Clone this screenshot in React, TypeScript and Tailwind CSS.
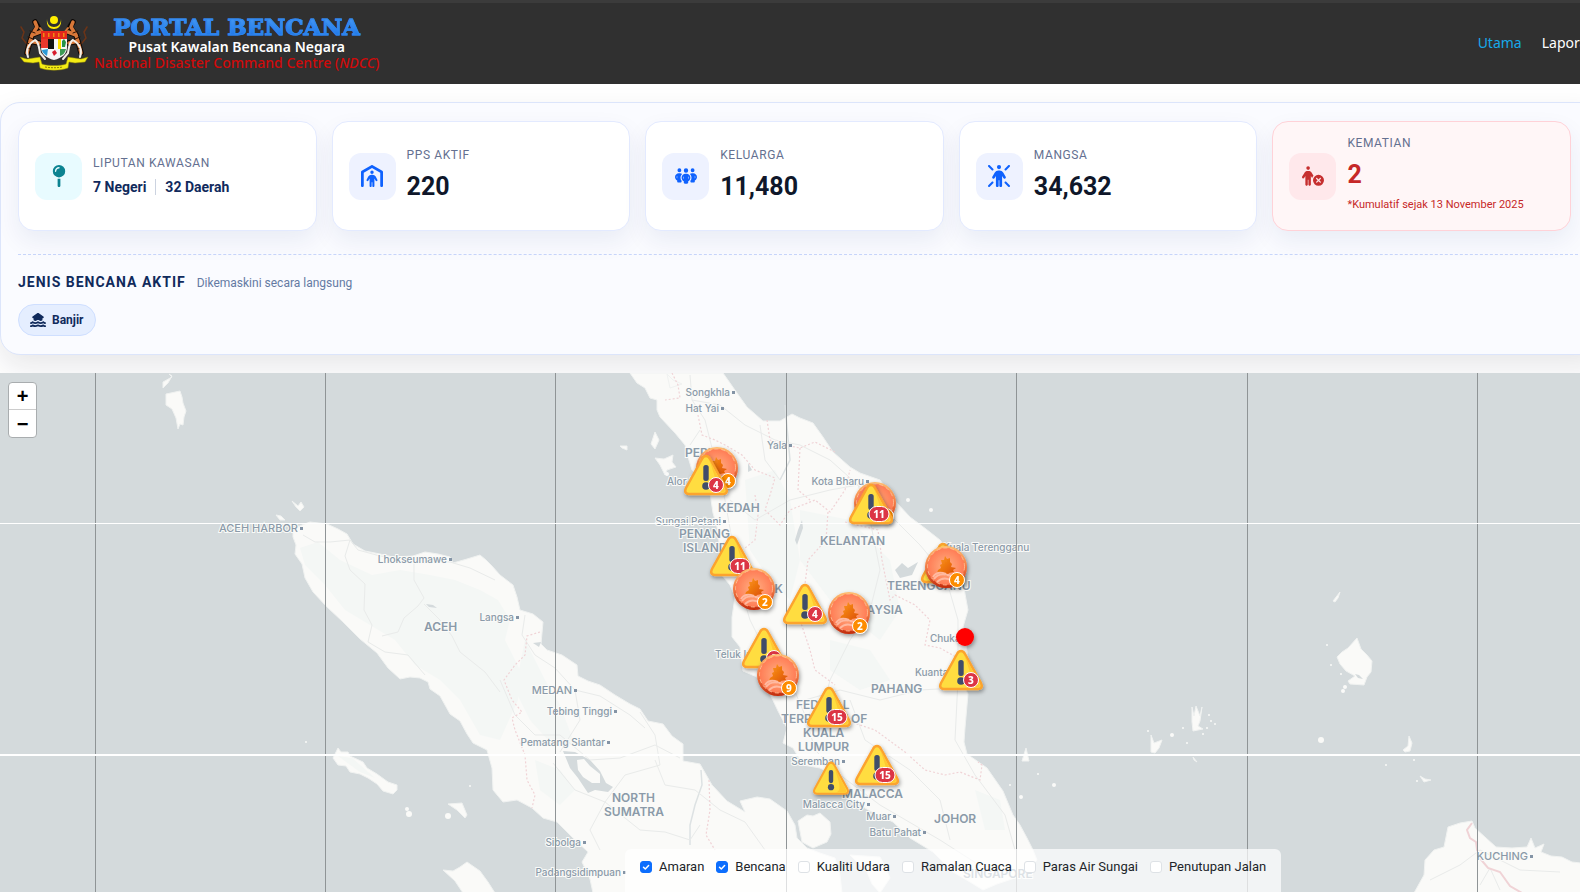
import { useState } from "react";
import type { ReactNode } from "react";
import { FaHouseFloodWater, FaMapPin, FaPeopleGroup, FaPersonCircleXmark, FaPersonRays, FaPersonShelter } from "react-icons/fa6";

const stats = [
  { label: "PPS Aktif", value: "220", icon: FaPersonShelter },
  { label: "Keluarga", value: "11,480", icon: FaPeopleGroup },
  { label: "Mangsa", value: "34,632", icon: FaPersonRays },
];

const land = [
  // Sumatra
  "293,529 302,525 310,522 327,524 338,529 347,534 353,544 365,551 380,554 393,557 413,556 425,552 438,554 450,557 453,563 467,559 480,555 486,560 492,566 500,575 513,585 517,597 520,610 533,614 543,622 541,644 547,650 562,655 577,665 578,676 588,681 600,685 615,695 630,704 640,709 648,721 663,724 672,736 683,744 683,761 700,764 712,785 727,801 745,812 740,801 757,797 770,799 787,811 795,825 797,838 807,848 820,853 835,858 840,875 842,893 593,893 590,879 582,862 588,852 573,838 557,822 543,818 532,808 517,800 503,802 493,790 492,768 487,750 473,743 467,734 460,721 450,714 440,696 430,689 428,682 420,678 410,677 400,679 388,668 377,653 360,639 343,622 327,607 313,592 305,578 302,564 295,554 296,545 293,537",
  // Semenanjung
  "630,373 637,383 645,388 650,398 657,400 657,410 660,417 675,433 685,445 688,457 692,470 702,481 710,493 713,513 717,527 720,550 720,573 730,585 735,597 732,617 732,637 740,647 743,671 757,677 770,694 778,711 787,728 783,743 793,748 803,765 820,768 833,775 843,788 853,801 870,811 893,822 910,838 933,852 953,872 970,882 983,890 997,884 1015,878 1030,868 1037,860 1033,850 1027,838 1020,825 1013,815 1003,791 987,768 967,754 964,742 965,728 968,694 963,684 968,657 963,627 968,610 963,583 950,553 940,540 926,529 910,517 897,503 880,480 860,473 850,467 833,452 823,437 813,423 800,418 792,414 780,421 763,421 747,407 737,393 723,373",
  // Borneo
  "1414,893 1424,875 1425,860 1434,850 1444,847 1448,827 1460,823 1472,821 1475,828 1496,847 1512,848 1527,847 1531,838 1535,848 1544,844 1541,852 1551,856 1562,857 1572,862 1581,863 1581,893",
  "798,821 807,815 813,816 820,813 830,822 831,834 827,842 813,848 802,842",
  "850,855 880,857 886,868 890,878 880,893 872,884 867,872",
  "163,382 172,377 169,374 172,376 168,383 163,388",
  "166,394 180,391 182,397 183,403 186,411 184,417 183,425 180,424 178,429 176,418 172,409 166,405",
  "292,501 298,506 301,502 304,507 300,511 296,507",
  "276,515 281,516 285,520 280,520",
  "338,748 341,752 348,752 350,756 363,762 367,768 377,774 388,782 397,785 397,790 393,794 383,791 377,784 368,778 360,774 350,772 346,766 338,765 333,758",
  "448,804 462,803 467,815 465,818 457,810",
  "443,870 453,871 460,867 467,862 480,871 488,882 495,893 463,893 455,881",
  "655,458 664,459 673,455 672,462 676,467 667,470 665,475 660,465",
  "655,432 659,440 655,449 651,444",
  "620,446 627,446 627,450 622,448",
  "667,374 673,380 682,384 670,388",
  "1357,638 1361,649 1367,655 1372,661 1371,672 1367,677 1364,685 1350,684 1348,681 1355,676 1346,671 1340,664 1337,657 1342,652 1348,648",
  "1340,592 1338,598 1335,602 1333,601",
  "1192,707 1194,716 1196,706 1200,716 1202,707 1200,721 1198,726 1203,729 1193,731 1192,722",
  "1151,735 1154,743 1162,740 1159,748 1155,753 1151,752",
  "1409,736 1412,743 1410,751 1405,752 1403,750 1408,746",
  "1420,776 1425,779 1431,780 1424,782",
  "1026,748 1029,761 1022,761",
  "1193,757 1197,762 1194,760",
];

const dots: [number, number, number][] = [
  [409, 814, 3], [407, 809, 2], [448, 816, 3], [470, 786, 1], [306, 742, 1], [908, 500, 2], [931, 510, 2], [667, 474, 2],
  [1321, 740, 3], [1327, 645, 1], [1331, 665, 1], [1341, 674, 1], [1345, 687, 2], [1343, 691, 2], [1148, 731, 1], [1172, 735, 2],
  [1183, 728, 1], [1209, 715, 1], [1211, 721, 1], [1207, 728, 1], [1187, 743, 1], [1386, 765, 1], [1414, 760, 1], [1038, 774, 1],
  [1054, 785, 2], [1021, 797, 2], [1010, 785, 1], [1417, 781, 1], [1215, 724, 1], [1203, 734, 1],
];

const forest = [
  "300,548 318,542 340,560 372,575 400,570 430,575 455,580 480,590 498,600 510,620 505,640 520,670 518,700 500,740 480,735 460,700 440,680 415,665 395,640 370,625 345,610 325,585 305,565",
  "525,640 545,680 560,705 575,745 550,742 530,720 515,690",
  "535,760 560,770 575,790 560,805 540,790",
  "745,480 775,470 790,500 800,560 790,600 770,580 750,550",
  "800,510 850,520 890,560 900,610 880,640 830,600 800,560",
  "830,640 870,650 890,680 860,690 830,670",
  "975,790 1000,800 1005,830 985,830",
  "338,756 352,758 375,778 360,772",
];

const roads = [
  "M303 535 L315 542 L330 542 L350 540 L358 550 L380 556 L413 560 L450 562 L470 568 L495 580",
  "M350 540 L345 556 L350 570 L365 584 L364 610 L372 625 L368 642",
  "M414 561 L414 580 L424 598 L418 606 L404 618 L398 632 L382 636",
  "M424 604 L440 620 L452 636 L460 652 L485 672 L500 692",
  "M368 642 L385 652 L408 655 L425 675",
  "M525 615 L522 635 L535 655 L555 668 L575 690 L600 696 L630 715 L645 728",
  "M500 680 L515 715 L535 735 L560 735 L590 760 L620 758 L655 745 L680 758",
  "M575 690 L580 720 L560 752 M640 712 L655 735 L660 765 L625 775 L605 802",
  "M553 763 L575 790 L605 802 L590 830 L600 850 M605 802 L640 830 L665 832 L690 840 L700 825",
  "M655 760 L665 785 L695 790 L720 810 L745 822 L765 850",
  "M690 375 L692 400 L705 420 L715 460 L725 500 L732 540 L738 580 L750 620 L765 650 L790 680 L805 715 L815 750 L840 775 L880 805 L940 840 L990 872",
  "M692 400 L720 405 L745 425 L775 440 L800 445 L830 460 L858 485",
  "M858 485 L870 520 L880 570 L870 610 L850 640 L830 680 L820 720",
  "M858 485 L890 515 L920 545 L945 575 L958 620 L958 680 L955 740 L975 775 L1005 815 L1015 850",
  "M805 700 L840 690 L880 700 L920 690 L955 688 M850 700 L865 740 L910 770 L940 800 L950 840",
  "M760 425 L765 460 L780 480 M700 430 L690 445 M730 500 L755 520 L790 500 L830 490 L858 485",
  "M1430 880 L1460 865 L1480 850 L1500 860 L1520 870 L1560 872 M1480 885 L1490 868 L1500 890",
];

const borders = [
  "M672 373 L678 385 L680 398 L665 400 M698 415 L702 435 L715 440 L725 445 L742 455 L755 470 L775 478 L770 495 L765 510 L780 525 L790 510 L815 500 L830 512 L845 490 L850 470",
  "M767 420 L770 440 L785 445 L800 448 L815 442 L835 452 M800 448 L798 490 L810 500",
  "M755 495 L758 515 L755 540 L745 548 M828 512 L826 540 L808 560 L803 600 L800 620 L810 650 L815 670 L835 685",
  "M845 522 L878 530 L882 560 L890 600 L895 595 L915 605 L930 620 L925 645 L940 648 L965 662",
  "M845 720 L875 730 L905 752 L925 770 L945 775 L960 772 L980 780 L982 765 L978 762",
  "M540 632 L527 636 L525 655 L515 665 L504 680 L512 700 L522 712 L512 718 L515 730 L525 755 L527 780 L535 795 L532 808",
  "M709 780 L710 810 L706 835 L715 850",
];

// towns: the label ends at its dot
const towns: [string, number, number][] = [
  ["Songkhla", 733, 396], ["Hat Yai", 722, 412], ["Yala", 790, 449], ["Sungai Petani", 724, 525], ["Kota Bharu", 867, 485],
  ["Seremban", 843, 765], ["Malacca City", 868, 808], ["Muar", 894, 820], ["Batu Pahat", 924, 836], ["Lhokseumawe", 450, 563],
  ["Langsa", 517, 621], ["Tebing Tinggi", 615, 715], ["Pematang Siantar", 608, 746], ["Sibolga", 584, 846],
  ["Padangsidimpuan", 624, 876], ["ACEH HARBOR", 301, 532], ["MEDAN", 575, 694], ["KUCHING", 1531, 860],
];

const areas: [string, number, number, number][] = [
  ["Alor Setar", 667, 485, 10], ["Kuala Terengganu", 943, 551, 10], ["Chukai", 930, 642, 10], ["Kuantan", 915, 676, 10],
  ["Teluk Intan", 715, 658, 10], ["PERLIS", 685, 457, 12], ["KEDAH", 718, 512, 12], ["PENANG", 679, 538, 12],
  ["ISLAND", 683, 552, 12], ["KELANTAN", 820, 545, 12], ["TERENGGANU", 887, 590, 12], ["PERAK", 743, 593, 12],
  ["MALAYSIA", 840, 614, 12], ["PAHANG", 871, 693, 12], ["FEDERAL", 796, 709, 12], ["TERRITORY OF", 781, 723, 12],
  ["KUALA", 803, 737, 12], ["LUMPUR", 798, 751, 12], ["MALACCA", 842, 798, 12], ["JOHOR", 934, 823, 12],
  ["SINGAPORE", 963, 878, 12], ["ACEH", 424, 631, 12], ["NORTH", 612, 802, 12], ["SUMATRA", 604, 816, 12],
];

type Marker = { kind: "warning" | "flood"; x: number; y: number; count?: number; small?: boolean };

const markers: Marker[] = [
  { kind: "flood", x: 717, y: 468, count: 4 },
  { kind: "warning", x: 706, y: 454, count: 4 },
  { kind: "flood", x: 875, y: 503, count: 2 },
  { kind: "warning", x: 871, y: 483, count: 11 },
  { kind: "warning", x: 732, y: 535, count: 11 },
  { kind: "flood", x: 754, y: 589, count: 2 },
  { kind: "warning", x: 805, y: 583, count: 4 },
  { kind: "flood", x: 849, y: 613, count: 2 },
  { kind: "warning", x: 943, y: 542 },
  { kind: "flood", x: 946, y: 567, count: 4 },
  { kind: "warning", x: 764, y: 627, count: 9 },
  { kind: "flood", x: 778, y: 675, count: 9 },
  { kind: "warning", x: 961, y: 649, count: 3 },
  { kind: "warning", x: 829, y: 686, count: 15 },
  { kind: "warning", x: 877, y: 744, count: 15 },
  { kind: "warning", x: 831, y: 761, small: true },
];

function Badge({ x, y, count, fill }: { x: number; y: number; count: number; fill: string }) {
  const w = count > 9 ? 20 : 15;
  return (
    <g>
      <rect x={x - w / 2} y={y - 7.5} width={w} height="15" rx="7.5" fill={fill} stroke="#fff" strokeWidth="1" />
      <text x={x} y={y + 4} textAnchor="middle" fill="#fff" className="font-['Noto_Sans',sans-serif] text-[10px] font-extrabold">{count}</text>
    </g>
  );
}

function WarningMarker({ x, y, count, small }: Marker) {
  return (
    <g transform={`translate(${x} ${y})`} filter="url(#drop)">
      <g transform={small ? "scale(.82)" : undefined}>
        <path d="M0 2 C2 2 3 3 4 5 L20 34 C22 38 20 40 17 40 L-17 40 C-20 40 -22 38 -20 34 L-4 5 C-3 3 -2 2 0 2Z" fill="#ffdd40" stroke="#fca32e" strokeWidth="2.5" />
        <path d="M3 5 L18 34 C20 38 18 38.500 15 38.500 L6 38.500 C14 36 10 26 3 5Z" fill="#ffc832" />
        <rect x="-2.700" y="11" width="5.400" height="16" rx="2.500" fill="#3f4d6b" />
        <circle cx="0" cy="32" r="3.800" fill="#3f4d6b" />
      </g>
      {count && <Badge x={count > 9 ? 8 : 10} y={31} count={count} fill="#dc3545" />}
    </g>
  );
}

function FloodMarker({ x, y, count }: Marker) {
  return (
    <g transform={`translate(${x} ${y})`} filter="url(#drop)">
      <circle r="21" fill="url(#rim)" />
      <circle r="18.500" cy="-.5" fill="url(#disc)" stroke="#ffc49c" strokeWidth=".8" strokeDasharray="4 3" />
      <path d="M-9 6 L-8 3 L-5 1 L-6 -2 L-4 -3 L-5 -7 L-2 -7 L-1 -11 L1 -8 L4 -9 L4 -5 L6 -3 L5 0 L10 1 L7 3 L8 5 L3 6 L1 9 L-3 7Z" fill="url(#flame)" />
      <path d="M-12 12 C-8 6 0 6 9 11 M-13 10 C-10 5 -5 5 0 7 M-9 15 C-4 10 2 11 6 14" fill="none" stroke="#ffb9a0" strokeWidth="2" />
      {count && <Badge x={11} y={13} count={count} fill="#fd8c00" />}
    </g>
  );
}

function MapCanvas() {
  return (
    <svg viewBox="0 373 1580 519" preserveAspectRatio="xMidYMin slice" className="absolute inset-0 h-full w-full" role="img" aria-label="Peta bencana">
      <defs>
        <filter id="drop" x="-30%" y="-30%" width="160%" height="160%">
          <feDropShadow dx="1" dy="2" stdDeviation="2" floodOpacity=".4" />
        </filter>
        <linearGradient id="rim" x2="0" y2="1">
          <stop offset="0" stopColor="#ffbd70" />
          <stop offset=".5" stopColor="#f27a45" />
          <stop offset="1" stopColor="#c22c0c" />
        </linearGradient>
        <radialGradient id="disc">
          <stop offset="0" stopColor="#ffb184" />
          <stop offset="1" stopColor="#ff7c55" />
        </radialGradient>
        <linearGradient id="flame" x2="1" y2="1">
          <stop offset="0" stopColor="#ff9d1c" />
          <stop offset="1" stopColor="#d94a00" />
        </linearGradient>
      </defs>
      <g fill="#fafaf8" stroke="#f0f2f1" strokeWidth="1" strokeLinejoin="round">
        {land.map((points) => <polygon key={points} points={points} />)}
        {dots.map(([x, y, r]) => <circle key={`${x}-${y}`} cx={x} cy={y} r={r} strokeWidth="0" />)}
      </g>
      <g fill="#f4f7f5">
        {forest.map((points) => <polygon key={points} points={points} />)}
      </g>
      <g fill="#d4dadc">
        <path d="M563 751 L575 752 L590 760 L600 771 L606 783 L613 787 L608 792 L595 790 L588 793 L578 778 L570 768Z" />
        <path d="M426 604 L433 605 L437 608 L429 607Z M533 643 L541 642 L539 647Z" />
        <path d="M895 570 L902 563 L908 568 L918 562 L912 575 L900 578Z M795 540 L798 530 L802 520 L803 528 L797 545Z M748 463 L752 470 L748 472Z" />
        <path d="M1355 674 L1359 675 L1363 679 L1358 678Z" />
      </g>
      <path d="M577 760 L584 759 L590 766 L600 774 L600 783 L592 783 L583 777 L578 770Z" fill="#fafaf8" />
      <path d="M701 770 L702 785 L695 805 L690 825 L690 845 M785 405 L790 460 L780 480" fill="none" stroke="#dde2e3" strokeWidth="1.500" />
      <g fill="none" stroke="#e9ebea" strokeWidth="1" strokeLinejoin="round">
        {roads.map((d) => <path key={d} d={d} />)}
      </g>
      <g fill="none" stroke="#f0d3d6" strokeWidth="1.200" strokeDasharray="2 2">
        {borders.map((d) => <path key={d} d={d} />)}
      </g>
      <path d="M1472 823 L1467 830 L1470 838 L1476 842 L1478 856 L1488 868 L1500 872 L1510 886 L1522 893" fill="none" stroke="#f0d3d6" strokeWidth="2" />
      <g className="font-['Inter',sans-serif] font-medium" fill="#8b9aa9" stroke="#fafaf8" strokeWidth="2" paintOrder="stroke">
        {towns.map(([name, x, y]) => <text key={name} x={x - 3} y={y} fontSize={name === name.toUpperCase() ? 11 : 10} textAnchor="end">{name}</text>)}
        {areas.map(([name, x, y, size]) => <text key={name} x={x} y={y} fontSize={size} className={size === 12 ? "font-semibold" : undefined}>{name}</text>)}
      </g>
      <g fill="#8494a6">
        {towns.map(([name, x, y]) => <rect key={name} x={x - 1} y={y - 5} width="3" height="3" />)}
      </g>
      <g stroke="#8f9496" strokeWidth="1">
        {[95.5, 325.5, 555.5, 786.5, 1016.5, 1247.5, 1477.5].map((x) => <line key={x} x1={x} x2={x} y1="373" y2="892" />)}
      </g>
      <path d="M0 523.500 H1580" stroke="#fff" />
      <path d="M0 755 H1580" stroke="#fff" strokeWidth="2" />
      <circle cx="965" cy="637" r="9" fill="#f00" filter="url(#drop)" />
      {markers.map((marker) =>
        marker.kind === "flood" ? <FloodMarker key={`${marker.x}-${marker.y}`} {...marker} /> : <WarningMarker key={`${marker.x}-${marker.y}`} {...marker} />
      )}
    </svg>
  );
}

function Crest() {
  return (
    <svg viewBox="0 0 78 64" className="h-16 w-[78px]" aria-hidden="true">
      <circle cx="39" cy="9" r="4" fill="#ffee00" />
      <path d="M32 8 C31 15 35 18 39 18 C43 18 47 15 46 8 C46 13 43 16 39 16 C35 16 32 13 32 8Z" fill="#ffee00" />
      {["", "translate(78 0) scale(-1 1)"].map((transform) => (
        <g key={transform} transform={transform || undefined} fill="none" strokeLinecap="round" strokeLinejoin="round">
          <path d="M20 11 L23 16 L17 24 L14 34 L12 42 M17 24 L25 21 M15 30 L24 32" stroke="#0b0705" strokeWidth="5.500" />
          <path d="M20 11 L22 16 L17 24 L14 34 L12 42 M17 24 L25 21 M15 30 L24 32" stroke="#d97839" strokeWidth="3.500" />
          <path d="M6 16 L9 21 L7 27 L11 32" stroke="#6b3418" strokeWidth="1.500" />
          <path d="M15 20 L20 22 M13 26 L18 28 M12 32 L17 34 M12 37 L15 38" stroke="#2a1206" strokeWidth="1" />
          <path d="M13 46 C10 37 15 32 20 29 C24 31 24 37 25 42 L30 48" stroke="#f3eee8" strokeWidth="2" />
          <path d="M25 17 L29 22" stroke="#d97839" strokeWidth="2" />
        </g>
      ))}
      <path d="M26 20 H52 V36 C52 43 47 47 39 49 C31 47 26 43 26 36Z" fill="#f5f5f5" />
      <path d="M26 20 H52 V28 H26Z" fill="#e5281c" />
      <path d="M28 24 H51" stroke="#f08a10" strokeWidth="4" strokeDasharray="1.500 3.500" />
      <path d="M26 28 H33 V37 H26Z" fill="#e8372c" />
      <path d="M33 28 H36 V38 H33Z M36 28 H39 V38 H36Z" fill="#111" />
      <path d="M43 28 H46 V38 H43Z" fill="#ffe000" />
      <path d="M47 30 L49 28 L51 31 L50 36 H47Z" fill="#26924a" />
      <path d="M27 39 L33 38 L32 45 C29 43 27 41 27 39Z" fill="#2c9bd6" />
      <path d="M37 41 L40 39 L42 42 L39 45Z" fill="#d61c2c" />
      <path d="M45 38 L51 38 C50 42 48 44 45 45Z" fill="#3b9b54" />
      <path d="M5 46 L12 48 L25 46 L27 53 C33 55 45 55 51 53 L53 46 L66 48 L73 46 L70 51 L60 52 L54 51 L53 57 C45 60 33 60 25 57 L24 51 L18 52 L9 51Z" fill="#f4ec14" stroke="#8a8108" strokeWidth=".5" />
      <path d="M30 56 C36 57 42 57 48 56" stroke="#887c08" strokeWidth="1" strokeDasharray="2 1" fill="none" />
    </svg>
  );
}

function StatCard({ label, icon, iconStyle, danger, children }: { label: string; icon: ReactNode; iconStyle: string; danger?: boolean; children: ReactNode }) {
  return (
    <article className={`flex items-center gap-[11px] rounded-2xl border px-4 py-[13px] shadow-[0_10px_24px_rgba(15,40,110,0.07)] ${danger ? "border-[#ffd2d8] bg-[#fff6f7]" : "border-[#e3eaff] bg-white"}`}>
      <div className={`flex h-[47px] w-[47px] shrink-0 items-center justify-center rounded-xl text-[22px] ${iconStyle}`}>{icon}</div>
      <div className="min-w-0">
        <h2 className="text-xs leading-4 tracking-wider text-[#647090] uppercase">{label}</h2>
        {children}
      </div>
    </article>
  );
}

export default function App() {
  const [layers, setLayers] = useState([
    { name: "Amaran", on: true },
    { name: "Bencana", on: true },
    { name: "Kualiti Udara", on: false },
    { name: "Ramalan Cuaca", on: false },
    { name: "Paras Air Sungai", on: false },
    { name: "Penutupan Jalan", on: false },
  ]);

  const toggle = (name: string) => setLayers(layers.map((layer) => (layer.name === name ? { ...layer, on: !layer.on } : layer)));

  return (
    <div className="flex min-h-screen flex-col overflow-x-hidden bg-white font-['Roboto',sans-serif]">
      <header className="relative z-10 w-[calc(100%+27px)] border-t-[3px] border-[#3b3b3b] bg-[#303030]">
        <div className="flex h-[81px] items-center justify-between pr-[9px] pb-px pl-[15px]">
          <a href="#" className="flex items-center gap-px">
            <Crest />
            <div className="flex flex-col items-center font-['Noto_Sans',sans-serif]">
              <span className="bg-linear-to-b from-[#4a9cf5] to-[#1672e6] bg-clip-text font-['DejaVu_Serif',serif] text-[23px] leading-6 font-bold text-transparent [-webkit-text-stroke:1px_#2f86ee]">PORTAL BENCANA</span>
              <span className="text-sm leading-4 font-semibold text-white">Pusat Kawalan Bencana Negara</span>
              <span className="text-sm leading-4 font-medium text-[#cf0a0a]">National Disaster Command Centre (<em>NDCC</em>)</span>
            </div>
          </a>
          <nav className="flex gap-5 font-['Noto_Sans',sans-serif] text-sm">
            <a href="#" className="text-[#17a9ea]">Utama</a>
            <a href="#" className="pr-0.5 text-white">Laporan</a>
          </nav>
        </div>
      </header>

      <section className="my-[18px] w-[calc(100%+27px)] rounded-[20px] border border-[#dce5fb] bg-[#fafbff] py-[18px] pr-[18px] pl-[17px] shadow-[0_12px_30px_rgba(15,23,42,0.1)]">
        <div className="grid grid-cols-5 gap-[15px] pr-[17px] pb-[23px]">
          <StatCard label="Liputan Kawasan" icon={<FaMapPin />} iconStyle="bg-[#e8fbff] text-[#0c8391]">
            <p className="flex items-center pt-[6px] text-sm leading-5 font-bold text-[#102a5c]">
              <span className="border-r border-[#ccd3e0] pr-[9px] leading-4">7 Negeri</span>
              <span className="pl-[9px]">32 Daerah</span>
            </p>
          </StatCard>
          {stats.map(({ label, value, icon: Icon }) => (
            <StatCard key={label} label={label} icon={<Icon />} iconStyle="bg-[#eef2ff] text-[#0f62fe]">
              <p className="pt-[6px] text-[25px] leading-9 font-bold text-[#0f172a]">{value}</p>
            </StatCard>
          ))}
          <StatCard label="Kematian" icon={<FaPersonCircleXmark />} iconStyle="bg-[#ffe8eb] text-[#c62f2f]" danger>
            <p className="pt-[6px] text-[25px] leading-9 font-bold text-[#c62828]">2</p>
            <p className="pt-1 pb-1 text-[11px] leading-4 text-[#c62828]">*Kumulatif sejak 13 November 2025</p>
          </StatCard>
        </div>

        <div className="border-t border-dashed border-[#c8d6fb] pt-[17px]">
          <div className="flex items-baseline gap-[11px]">
            <h2 className="text-sm leading-5 font-bold tracking-[1px] text-[#102a5c] uppercase">Jenis Bencana Aktif</h2>
            <p className="text-xs text-[#647aa3]">Dikemaskini secara langsung</p>
          </div>
          <span className="mt-3 inline-flex h-8 items-center gap-[6px] rounded-full border border-[#cfdfff] bg-[#e5eeff] px-[11px] text-xs font-bold text-[#102a5c]">
            <FaHouseFloodWater className="text-base" />
            Banjir
          </span>
        </div>
      </section>

      <main className="relative min-h-[518px] flex-1 overflow-hidden bg-[#d4dadc]">
        <MapCanvas />
        <div className="absolute top-[9px] left-2 flex flex-col overflow-hidden rounded-sm border border-[#a9adaf] bg-white font-['Liberation_Sans',sans-serif] text-xl font-bold">
          <button type="button" aria-label="Zum masuk" className="flex h-[27px] w-[27px] items-center justify-center border-b border-[#ccc]">+</button>
          <button type="button" aria-label="Zum keluar" className="flex h-[27px] w-[27px] items-center justify-center">−</button>
        </div>
        <div className="absolute bottom-0 left-[625px] flex h-[43px] gap-3 rounded-t-md bg-white/70 px-[15px] pt-2 text-[13px] text-[#212529]">
          {layers.map(({ name, on }) => (
            <label key={name} className="flex h-5 items-center gap-[7px] whitespace-nowrap">
              <span className="relative flex h-3 w-3">
                <input type="checkbox" checked={on} onChange={() => toggle(name)} className="h-3 w-3 appearance-none rounded-[3px] border border-[#dee2e6] bg-white checked:border-[#0d6efd] checked:bg-[#0d6efd]" />
                {on && (
                  <svg viewBox="0 0 12 12" className="pointer-events-none absolute inset-0 h-3 w-3" fill="none" stroke="#fff" strokeWidth="1.500" strokeLinecap="round" strokeLinejoin="round">
                    <path d="M3.500 6.200 L5.300 8 L8.600 4.500" />
                  </svg>
                )}
              </span>
              {name}
            </label>
          ))}
        </div>
      </main>
    </div>
  );
}
